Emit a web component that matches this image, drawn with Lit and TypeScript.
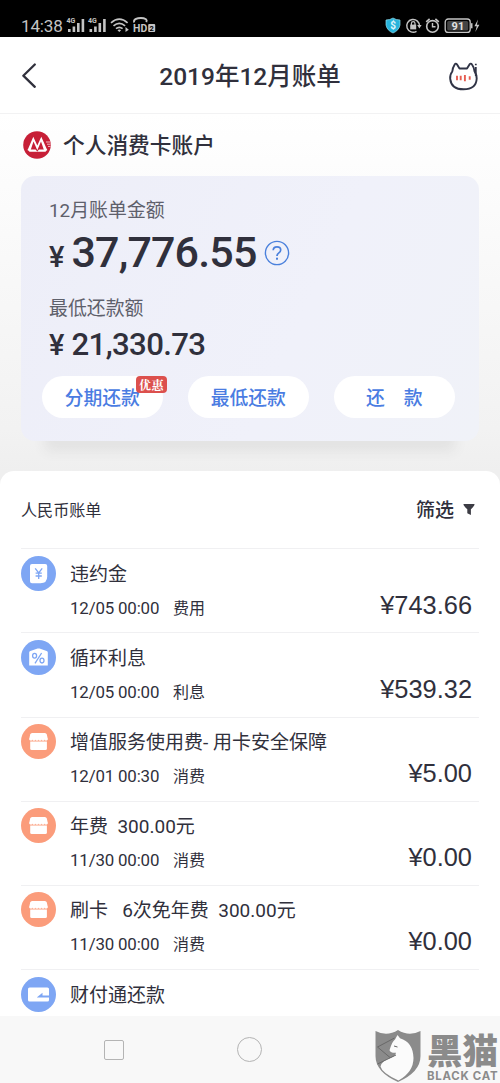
import { LitElement, html, css, svg } from "lit";
import { customElement, property } from "lit/decorators.js";

type Kind = "fee" | "rate" | "shop" | "pay";

interface Entry {
  kind: Kind;
  title: string;
  date?: string;
  type?: string;
  amount?: string;
}

const ENTRIES: Entry[] = [
  { kind: "fee", title: "违约金", date: "12/05 00:00", type: "费用", amount: "¥743.66" },
  { kind: "rate", title: "循环利息", date: "12/05 00:00", type: "利息", amount: "¥539.32" },
  { kind: "shop", title: "增值服务使用费- 用卡安全保障", date: "12/01 00:30", type: "消费", amount: "¥5.00" },
  { kind: "shop", title: "年费  300.00元", date: "11/30 00:00", type: "消费", amount: "¥0.00" },
  { kind: "shop", title: "刷卡   6次免年费  300.00元", date: "11/30 00:00", type: "消费", amount: "¥0.00" },
  { kind: "pay", title: "财付通还款" },
];

const GLYPHS = {
  fee: svg`<circle cx="17.5" cy="17.5" r="17.5" fill="#7ea6f4"/>
    <path d="M11 8H24.2Q26.2 8 26.2 10V20.5Q26.2 27.3 19.5 27.3H11Q9 27.3 9 25.3V10Q9 8 11 8Z" fill="#fff"/>
    <path d="M14.2 12.3L17.7 17L21.2 12.3M17.7 17V23M14.6 17.2H20.8M14.6 20H20.8" fill="none" stroke="#7ea6f4" stroke-width="1.3"/>`,
  rate: svg`<circle cx="17.5" cy="17.5" r="17.5" fill="#7ea6f4"/>
    <path d="M8.2 12.5Q8.2 11.3 9.4 11L16.6 8.6Q17.6 8.2 18.6 8.6L25.6 11Q26.8 11.3 26.8 12.5V25.5H8.2Z" fill="#fff"/>
    <g fill="none" stroke="#7ea6f4" stroke-width="1.3"><ellipse cx="13.6" cy="15.8" rx="2" ry="2.4"/><ellipse cx="21" cy="20.6" rx="2" ry="2.4"/><path d="M20.6 13L14 23.4"/></g>`,
  shop: svg`<circle cx="17.5" cy="17.5" r="17.5" fill="#fb9c7b"/>
    <path d="M11.1 9H23.9Q25.4 9 25.8 10.5L26.8 15H8.2L9.2 10.5Q9.6 9 11.1 9Z" fill="#fff"/>
    <path d="M8.2 14.8H26.8A1.55 1.5 0 0 1 23.7 15.4A1.55 1.3 0 0 1 20.6 15.4A1.55 1.3 0 0 1 17.5 15.4A1.55 1.3 0 0 1 14.4 15.4A1.55 1.3 0 0 1 11.3 15.4A1.55 1.5 0 0 1 8.2 14.8Z" fill="#fff"/>
    <path d="M9.2 17.6H25.9V24.4Q25.9 25.9 24.4 25.9H10.7Q9.2 25.9 9.2 24.4Z" fill="#fff"/>`,
  pay: svg`<circle cx="17.5" cy="17.5" r="17.5" fill="#7ea6f4"/>
    <rect x="7" y="10.5" width="21" height="14" rx="1.6" fill="#fff"/>
    <path d="M16 20.3L21.5 15.8V18.4H28V20.6H16Z" fill="#7ea6f4"/>`,
};

const base = css`
  * {
    box-sizing: border-box;
  }
  svg {
    display: block;
    flex: none;
  }
`;

@customElement("bill-row")
class BillRow extends LitElement {
  @property({ attribute: false }) entry!: Entry;

  static styles = [
    base,
    css`
      :host {
        display: block;
        flex: none;
        height: 84.2px;
        margin: 0 21px;
        border-top: 1px solid #f0f0f2;
      }
      .row {
        display: flex;
        padding-top: 6.5px;
        gap: 14px;
      }
      .main {
        flex: 1;
        min-width: 0;
      }
      .title {
        height: 35px;
        line-height: 38px;
        font-size: 19px;
        white-space: pre;
      }
      .meta {
        display: flex;
        align-items: center;
        height: 32px;
      }
      .date {
        width: 103px;
        padding-top: 2px;
        font-size: 16.9px;
        letter-spacing: -0.18px;
      }
      .type {
        font-size: 16px;
      }
      .amount {
        flex: 1;
        padding-right: 7px;
        margin-bottom: 4px;
        text-align: right;
        font: 25.4px/26px "Liberation Sans", sans-serif;
      }
    `,
  ];

  render() {
    const e = this.entry;
    return html`<div class="row">
      <svg width="35" height="35" viewBox="0 0 35 35">${GLYPHS[e.kind]}</svg>
      <div class="main">
        <div class="title">${e.title}</div>
        ${e.date
          ? html`<div class="meta">
              <span class="date">${e.date}</span><span class="type">${e.type}</span><span class="amount">${e.amount}</span>
            </div>`
          : null}
      </div>
    </div>`;
  }
}

@customElement("app-root")
class AppRoot extends LitElement {
  static styles = [
    base,
    css`
      :host {
        display: flex;
        flex-direction: column;
        width: 500px;
        height: 1083px;
        overflow: hidden;
        background: #fff;
        color: #30303c;
        font-family: Roboto, "Noto Sans CJK SC", sans-serif;
      }
      .status {
        display: flex;
        align-items: center;
        flex: none;
        height: 37px;
        padding: 14px 20.5px 0 21px;
        background: #000;
        color: #c4c4c4;
      }
      .clock {
        width: 45px;
        font-size: 17.1px;
        line-height: 22px;
        letter-spacing: -0.2px;
        white-space: nowrap;
      }
      .spacer {
        flex: 1;
      }
      .header {
        display: grid;
        grid-template-columns: 60px 1fr 60px;
        align-items: center;
        flex: none;
        height: 77px;
        border-bottom: 1.5px solid #f2f2f3;
      }
      .back {
        margin: 1px 0 0 20px;
      }
      .heading {
        text-align: center;
        font-size: 24.5px;
        line-height: 36px;
        font-weight: 500;
        padding-top: 4px;
      }
      .cat {
        margin: 3px 0 0 5px;
      }
      .account {
        flex: none;
        height: 357px;
        padding: 14px 21px 0;
        background: linear-gradient(#fff 0, #fcfcfc 20%, #f2f2f2 88%, #efefef 100%);
      }
      .owner {
        display: flex;
        align-items: center;
        height: 33px;
        padding-left: 2px;
        gap: 12px;
        font-size: 21.7px;
        line-height: 30px;
        font-weight: 500;
      }
      .owner-name {
        padding-top: 2px;
      }
      .card {
        height: 264.5px;
        margin-top: 15px;
        padding: 19px 21px 0 28px;
        border-radius: 14px;
        background: linear-gradient(115deg, #edeef8, #f0f1fa 60%, #f0f2f8);
        box-shadow: 0 34px 12px -24px rgba(60, 60, 60, 0.08);
      }
      .label {
        height: 28px;
        line-height: 32px;
        font-size: 18.9px;
        color: #5e606b;
      }
      .sum {
        display: flex;
        align-items: baseline;
        font-weight: 500;
      }
      .yen {
        width: 22.5px;
        font-size: 29px;
        letter-spacing: 0;
      }
      .big {
        height: 60px;
        line-height: 58px;
        font-size: 43px;
        letter-spacing: -0.85px;
      }
      .small {
        height: 42px;
        line-height: 49px;
        font-size: 31.2px;
        letter-spacing: -0.65px;
      }
      .help {
        align-self: center;
        margin-left: 7.8px;
      }
      .second {
        margin-top: 9px;
        line-height: 33px;
      }
      .actions {
        display: flex;
        gap: 25.5px;
        margin: 14px 0 0 -7px;
      }
      .action {
        position: relative;
        width: 120.5px;
        height: 42px;
        border-radius: 21px;
        background: #fff;
        color: #4a7ce2;
        font-size: 18.8px;
        line-height: 47px;
        font-weight: 500;
        text-align: center;
        white-space: pre;
      }
      .badge {
        position: absolute;
        left: 94px;
        top: 0;
        width: 31px;
        height: 16.5px;
        border-radius: 4px;
        background: #dc504d;
        color: #fff;
        font: 700 12px/17px "Noto Serif CJK SC", "Noto Sans CJK SC", serif;
        letter-spacing: 0.5px;
      }
      .sheet-back {
        display: flex;
        flex: 1;
        min-height: 0;
        background: #efefef;
      }
      .sheet {
        display: flex;
        flex-direction: column;
        flex: 1;
        overflow: hidden;
        border-radius: 14px 14px 0 0;
        background: #fff;
      }
      .filterbar {
        display: flex;
        align-items: center;
        flex: none;
        height: 77.2px;
        padding: 0 25px 2px 21px;
        font-size: 16.1px;
      }
      .filter {
        display: flex;
        align-items: center;
        gap: 9px;
        font-size: 19px;
        font-weight: 500;
      }
      .funnel {
        margin-top: 2px;
      }
      .nav {
        display: flex;
        flex: none;
        height: 67px;
        padding-left: 104px;
        background: #f8f8f8;
      }
      .square {
        width: 20px;
        height: 20px;
        margin-top: 24px;
        border: 1px solid #b4b4b4;
        border-radius: 2px;
      }
      .round {
        width: 25px;
        height: 25px;
        margin: 21px 0 0 113px;
        border: 1px solid #b4b4b4;
        border-radius: 50%;
      }
      .brand {
        display: flex;
        margin: 13px 0 0 113px;
        gap: 6px;
        color: #8b8b8b;
      }
      .words {
        display: flex;
        flex-direction: column;
      }
      .name {
        font: 900 35.5px/39px "Noto Sans CJK SC", sans-serif;
        white-space: nowrap;
        height: 41px;
      }
      .latin {
        font: 700 11.4px/12px Inter, "Liberation Sans", sans-serif;
        white-space: nowrap;
        letter-spacing: 0.75px;
      }
    `,
  ];

  private signals() {
    const bars = svg`<rect x="2" y="14" width="2.6" height="3"/><rect x="6.6" y="11.5" width="2.6" height="5.5"/><rect x="11" y="8" width="2.6" height="9"/><rect x="15.6" y="4" width="2.6" height="13"/>`;
    return html`<svg width="90" height="22" viewBox="0 0 90 22" fill="#c4c4c4">
      <g font-family="Roboto" font-size="7" font-weight="700"><text x="0.5" y="8">4G</text><text x="22" y="8">4G</text></g>
      <g>${bars}</g>
      <g transform="translate(21.5 0)">${bars}</g>
      <g fill="none" stroke="#c4c4c4" stroke-width="1.7"><path d="M45 7.8Q53.3 0.6 61.6 7.8"/><path d="M47.5 10.8Q53.3 5.9 59.1 10.8"/><path d="M50 13.7Q53.3 11 56.6 13.7"/></g>
      <path d="M51.5 15.2Q53.3 14 55.1 15.2L53.3 17Z"/><path d="M59.5 12L62.8 14.8L59.5 17Z"/>
      <path d="M68 7.5Q67.5 4 72 3.3Q77 2.5 80 4.3Q81.2 5.2 80.3 7.2" fill="none" stroke="#c4c4c4" stroke-width="1.9"/>
      <text x="67" y="17" font-family="Roboto" font-size="10.5" font-weight="700">HD</text>
      <rect x="82.2" y="9" width="7" height="8" rx="1"/><text x="83.6" y="16" font-family="Roboto" font-size="7.5" font-weight="700" fill="#000">2</text>
    </svg>`;
  }

  private indicators() {
    return html`<svg width="95" height="22" viewBox="0 0 95 22" fill="none" stroke="#c4c4c4">
      <path d="M8 3Q11 5 15 5V10Q14 15.5 8 18Q2 15.5 1 10V5Q5 5 8 3Z" fill="#27b4dc" stroke="#8fdcee" stroke-width=".7"/>
      <text x="5.2" y="14" font-family="Roboto" font-size="10" font-weight="700" fill="#e0f6fb" stroke="none">$</text>
      <path d="M31.5 16.3A6.4 6.4 0 1 1 34.5 11.2" stroke-width="1.4"/><path d="M32.2 10H36.6L34.4 13.4Z" fill="#c4c4c4" stroke="none"/>
      <rect x="25.2" y="9.6" width="6" height="4.8" fill="#c4c4c4" stroke="none"/><path d="M26.4 10V8.5Q26.4 6.7 28.2 6.7Q30 6.7 30 8.5V10" stroke-width="1.2"/>
      <circle cx="47.5" cy="11.4" r="5.8" stroke-width="1.6"/><path d="M47.5 8V11.8H50.5" stroke-width="1.4"/><path d="M41.2 6.8L44.6 3.8M50.4 3.8L53.8 6.8" stroke-width="1.6"/>
      <rect x="60.2" y="4" width="25" height="13.4" rx="3" stroke-width="1.3"/><rect x="62.2" y="6" width="21" height="9.4" rx="1.5" fill="#444" stroke="none"/>
      <text x="66.6" y="14.6" font-family="Roboto" font-size="11" font-weight="700" fill="#e2e2e2" stroke="none">91</text>
      <path d="M86.7 8.2V13.3" stroke-width="1.6"/><path d="M93 4.6L89.4 11.3H91.7L90.3 17L94.4 9.8H91.9Z" fill="#c4c4c4" stroke="none"/>
    </svg>`;
  }

  render() {
    return html`
      <div class="status">
        <span class="clock">14:38</span>${this.signals()}<span class="spacer"></span>${this.indicators()}
      </div>
      <div class="header">
        <svg class="back" width="20" height="28" viewBox="0 0 20 28">
          <path d="M14.8 2.5L3.3 13.7L14.8 24.8" fill="none" stroke="#30303c" stroke-width="2.3" stroke-linecap="round" stroke-linejoin="round" />
        </svg>
        <div class="heading">2019年12月账单</div>
        <svg class="cat" width="36" height="32" viewBox="0 0 36 32">
          <path d="M14.5 7.5L11.9 3.3Q10.8 1.9 9.7 3.5Q7.5 7 7.3 10.5Q4.8 13.5 5.2 17.8Q6.3 28.3 18.5 28.3Q31.2 28.3 31.7 17.5Q31.9 14 29.6 10.5Q29 6.2 27 3.5Q25.8 1.8 24.5 3.4L22 7.5Z" fill="none" stroke="#303446" stroke-width="1.9" stroke-linejoin="round" />
          <path d="M30.8 2.8V4.3M30.8 6V15" stroke="#303446" stroke-width="1.8" />
          <path d="M12 14.8V19.2M15.7 14.8V19.2M19.9 14V20.3M24.7 15.2V18.8" stroke="#e65d51" stroke-width="1.9" />
        </svg>
      </div>
      <div class="account">
        <div class="owner">
          <svg width="28" height="28" viewBox="0 0 28 28">
            <circle cx="14" cy="14" r="13.8" fill="#c71f37" />
            <path d="M4.5 19.2L10.3 5.8L14.3 14.5L18.3 5.8L24.3 19.2H21L18 10.6L14.3 19.2L10.5 10.6L7.6 19.2Z" fill="#fff" />
            <path d="M4.5 18.4H12.5L14.3 20.6L16 18.4H24.3L22.5 20.8H6.5Z" fill="#fff" />
            <path d="M23 11H27M24 13.2H27.5M25 15.4H27.5" stroke="#f0bcc4" stroke-width="1" />
          </svg>
          <span class="owner-name">个人消费卡账户</span>
        </div>
        <div class="card">
          <div class="label">12月账单金额</div>
          <div class="sum big">
            <span class="yen">¥</span><span>37,776.55</span>
            <svg class="help" width="26" height="26" viewBox="0 0 26 26">
              <circle cx="13" cy="13" r="11.6" fill="none" stroke="#4a80dc" stroke-width="1.4" />
              <path d="M9.2 10.2Q9.3 6.8 13 6.8Q16.7 6.8 16.7 10Q16.7 11.6 14.6 13.1Q13 14.2 13 16" fill="none" stroke="#4a80dc" stroke-width="1.7" />
              <rect x="12" y="17.7" width="2" height="2" fill="#4a80dc" />
            </svg>
          </div>
          <div class="label second">最低还款额</div>
          <div class="sum small"><span class="yen">¥</span><span>21,330.73</span></div>
          <div class="actions">
            <div class="action">分期还款<span class="badge">优惠</span></div>
            <div class="action">最低还款</div>
            <div class="action">还　款</div>
          </div>
        </div>
      </div>
      <div class="sheet-back">
        <div class="sheet">
          <div class="filterbar">
            <span>人民币账单</span><span class="spacer"></span>
            <span class="filter">筛选
              <svg class="funnel" width="12" height="13" viewBox="0 0 12 13"><path d="M0.5 1H11.5Q11.8 2.6 7.9 6.2V12L4.3 10.2V6.2Q0.2 2.6 0.5 1Z" fill="#3c3c44" /></svg>
            </span>
          </div>
          ${ENTRIES.map((e) => html`<bill-row .entry=${e}></bill-row>`)}
        </div>
      </div>
      <div class="nav">
        <div class="square"></div>
        <div class="round"></div>
        <div class="brand">
          <svg width="46" height="54" viewBox="0 0 46 54">
            <path d="M0.5 2Q12 8 23 1Q34 8 45.5 2V27Q45.5 43 23 53Q0.5 43 0.5 27Z" fill="#8b8b8b" />
            <path d="M20 10.5L22.5 6L25 9.2Q38 13 38.5 29Q38.5 43 23.5 51.5Q7 44 5.5 37.5Q7 31.5 16 28.8Q20.5 26.7 21 23.8Q16 24.3 14.5 21.3Q17 12.5 20 10.5Z" fill="#fbfbfb" />
            <path d="M19.5 9L2.5 18L15 28.5M2.5 35L21 26M19 17L22.5 18" fill="none" stroke="#686868" stroke-width="1" />
          </svg>
          <div class="words"><div class="name">黑猫</div><div class="latin">BLACK CAT</div></div>
        </div>
      </div>
    `;
  }
}
